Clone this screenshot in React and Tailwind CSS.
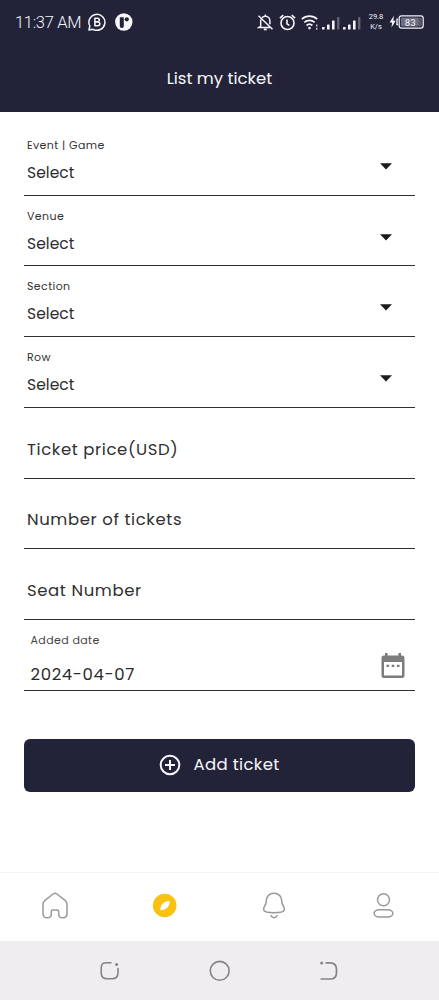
import { useState } from 'react';
import clsx from 'clsx';

const SELECT_FIELDS = [
  { label: 'Event | Game', tracking: 'tracking-[0.4px]' },
  { label: 'Venue', tracking: 'tracking-[0.4px]' },
  { label: 'Section', tracking: 'tracking-[0.4px]' },
  { label: 'Row', tracking: 'tracking-[0.4px]' },
];

const TEXT_FIELDS = ['Ticket price(USD)', 'Number of tickets', 'Seat Number'];

// ─── Status bar ───────────────────────────────────────────────────────────────
function Signal() {
  return (
    <svg className="h-[14px] w-[18px]" viewBox="0 0 18 14" fill="#f4f4fa">
      <rect x="0" y="11" width="2.6" height="2.6" rx="0.6" />
      <rect x="5" y="8.5" width="2.6" height="5.1" rx="0.6" />
      <rect x="10" y="4.5" width="2.6" height="9.1" rx="0.6" />
      <rect x="15" y="1" width="2.4" height="12.6" rx="0.6" opacity="0.3" />
    </svg>
  );
}

function StatusBar() {
  return (
    <div className="flex h-11 items-center pl-[15px] pr-[14px] text-[#f4f4fa]">
      <span className="w-[73px] whitespace-nowrap pt-[2px] font-[Roboto,sans-serif] text-[16.5px] font-light leading-5 tracking-[-0.3px]">11:37 AM</span>
      <svg className="h-[18px] w-[18px]" viewBox="0 0 18 18" fill="none" stroke="currentColor" strokeWidth="1.5" strokeLinejoin="round">
        <path d="M1 17l.8-4A8 8 0 1 1 5 16.3Z" />
        <path d="M6.9 5.3h2.6a1.8 1.8 0 0 1 0 3.6H6.9zm0 3.6h3a1.9 1.9 0 0 1 0 3.8h-3z" strokeWidth="1.6" />
      </svg>
      <svg className="ml-[9px] h-[18px] w-[18px]" viewBox="0 0 18 18">
        <circle cx="8.8" cy="9" r="8.7" fill="#f7f7fb" />
        <path d="M4.8 4.2h4v8.8a2 2 0 0 1-4 0Z" fill="#222338" />
        <circle cx="11.8" cy="6.3" r="2.1" fill="#222338" />
      </svg>

      <div className="ml-auto flex items-center">
        <svg className="h-[17px] w-[17px]" viewBox="0 0 17 17" fill="none" stroke="currentColor" strokeWidth="1.5">
          <path d="M5 3.8C6 2.6 7.1 2.2 8.3 2.2c2.7 0 4.6 2 4.6 4.7v3.3M3.7 5.4v7.1L2.2 13.4h11.2M8.3.5v1.7M1.5 1.8l14 13.5" />
          <path d="M6.8 15.4h3" strokeWidth="1.8" />
        </svg>
        <svg className="ml-[5px] h-[17px] w-[17px]" viewBox="0 0 17 17" fill="none" stroke="currentColor" strokeWidth="1.6">
          <circle cx="8.5" cy="9" r="6.5" />
          <path d="M8 5.6v4.2l2.4 1.6M.9 4.2l3.4-3M12.7 1.2l3.4 3" />
        </svg>
        <svg className="ml-[5px] h-[17px] w-[19px]" viewBox="0 0 19 17" fill="none" stroke="currentColor" strokeWidth="1.7">
          <path d="M.8 5.2a11.3 11.3 0 0 1 15.4 0M3.3 8.4a7.6 7.6 0 0 1 10.4 0M5.6 11.5a4.3 4.3 0 0 1 5.8 0" />
          <circle cx="8.5" cy="14.1" r="1.3" fill="currentColor" stroke="none" />
          <path d="M15.8 10.5v2M15.8 13.8v2" strokeWidth="1.1" />
        </svg>
        <div className="ml-[2px] flex gap-[3px] pt-[2px]">
          <Signal />
          <Signal />
        </div>
        <div className="ml-[6px] w-[18px] whitespace-nowrap text-center font-[Roboto,sans-serif] text-[7.5px] leading-[10px]">
          <div>29.8</div>
          <div>K/s</div>
        </div>
        <svg className="ml-[4px] h-[14px] w-[36px]" viewBox="0 0 36 14">
          <path d="M4.9.8.6 7.6h2.5l-.6 5 4.2-6.8H4.3Z" fill="currentColor" />
          <path d="M9.2 4.2H8v5.3h1.2" fill="none" stroke="currentColor" strokeWidth="1.3" />
          <rect x="10.2" y="0.9" width="24" height="12.2" rx="2.3" fill="#222338" stroke="#f4f4fa" strokeWidth="1.2" />
          <rect x="11.8" y="2.4" width="18" height="9.2" rx="1" fill="#6d6e82" />
          <rect x="29.8" y="2.4" width="3" height="9.2" rx="0.8" fill="#9b9baa" opacity="0.45" />
          <text x="21.2" y="10.6" textAnchor="middle" fontFamily="Roboto, sans-serif" fontSize="9.6" fill="#f7f7fb">83</text>
        </svg>
      </div>
    </div>
  );
}

// ─── Form rows ────────────────────────────────────────────────────────────────
function SelectField({ label, tracking }) {
  return (
    <button type="button" className="flex h-[70.75px] w-full border-b border-[#303030] pl-[3px] pr-[23.5px] text-left">
      <span className="flex flex-1 flex-col pt-[13px]">
        <span className={clsx('text-[11px] leading-[14px] text-[#333]', tracking)}>{label}</span>
        <span className="mt-[10px] pt-px text-[15.5px] leading-5 tracking-[0.05px] text-[#2d2d2d]">Select</span>
      </span>
      <svg className="mt-[38px] h-[7px] w-3" viewBox="0 0 12 7">
        <path d="M0 .2h12L6 6.5Z" fill="#1b1b1b" />
      </svg>
    </button>
  );
}

function TextField({ label }) {
  return (
    <div className="flex h-[70.75px] items-center border-b border-[#303030] pl-[3px] pt-[14px]">
      <span className="whitespace-nowrap text-[16.5px] leading-6 tracking-[0.6px] text-[#303030]">{label}</span>
    </div>
  );
}

function DateField() {
  return (
    <div className="flex h-[70.75px] justify-between border-b border-[#303030] pl-[6.5px] pr-[10px]">
      <div className="pt-[13px]">
        <div className="text-[11px] leading-[14px] tracking-[0.4px] text-[#444]">Added date</div>
        <div className="mt-[16px] text-[16.5px] leading-6 tracking-[0.65px] text-[#2b2b2b]">2024-04-07</div>
      </div>
      <svg className="mt-[32px] h-[27px] w-6" viewBox="0 0 24 27">
        <path d="M4 1h2.6v2.5h10.8V1H20v2.5h1a2.5 2.5 0 0 1 2.5 2.5v17.5A2.5 2.5 0 0 1 21 26H3A2.5 2.5 0 0 1 .5 23.5V6A2.5 2.5 0 0 1 3 3.5h1ZM3 10v13.5h18V10Z" fill="#7c7c7c" fillRule="evenodd" />
        <path d="M5.5 12.7h2.6v2.4H5.5zM10.7 12.7h2.6v2.4h-2.6zM15.9 12.7h2.6v2.4h-2.6z" fill="#7c7c7c" />
      </svg>
    </div>
  );
}

// ─── Bottom tabs ──────────────────────────────────────────────────────────────
const TABS = [
  {
    id: 'home',
    icon: (
      <path d="M13 1.2c.8 0 1.4.3 2 .8l8 6.3c1.3 1 2 2.2 2 3.7v9.5c0 2.7-1.7 4.3-4.1 4.3-2.5 0-4.2-1.1-4.2-3.6v-2.6c0-1-.6-1.5-1.5-1.5h-4.4c-.9 0-1.5.5-1.5 1.5v2.6c0 2.5-1.7 3.6-4.2 3.6C2.7 25.8 1 24.2 1 21.5V12c0-1.5.7-2.7 2-3.7L11 2c.6-.5 1.2-.8 2-.8Z" />
    ),
  },
  {
    id: 'explore',
    icon: (
      <g stroke="none">
        <circle cx="12.7" cy="13.5" r="11.8" fill="#f9c210" />
        <path d="M17.6 9c-3.5.2-6.500 1.400-7.900 3.700-1 1.700-1.300 3.500-1.200 5.600 3.700-.2 6.400-1.500 7.900-4 .9-1.600 1.200-3.300 1.200-5.300Z" fill="#fff" />
      </g>
    ),
  },
  {
    id: 'alerts',
    icon: (
      <>
        <path d="M13 1.2c-4.500 0-7.700 3.300-7.700 7.400 0 3-.7 4.300-1.900 6.100-.8 1.200-1.100 2.200-.7 3.300.7 2 4.400 2.700 10.300 2.700s9.600-.7 10.300-2.700c.4-1.100.1-2.100-.7-3.300-1.200-1.800-1.900-3.100-1.900-6.100 0-4.100-3.200-7.400-7.700-7.400Z" />
        <path d="M9.900 23.600c1.600 2.700 4.600 2.700 6.200 0" />
      </>
    ),
  },
  {
    id: 'profile',
    icon: (
      <>
        <circle cx="12.500" cy="7.700" r="6" />
        <rect x="3.100" y="17.700" width="18.800" height="7.300" rx="5" ry="3.650" />
      </>
    ),
  },
];

function TabBar({ active, onChange }) {
  return (
    <nav className="flex h-[69px] border-t border-[#f3f3f3] bg-white">
      {TABS.map((tab) => (
        <button key={tab.id} type="button" aria-pressed={active === tab.id} onClick={() => onChange(tab.id)} className="flex flex-1 justify-center pt-[18.5px]">
          <svg className="h-[27px] w-[26px]" viewBox="0 0 26 27" fill="none" stroke="#999" strokeWidth="1.5" strokeLinecap="round">
            {tab.icon}
          </svg>
        </button>
      ))}
    </nav>
  );
}

function SystemNav() {
  return (
    <div className="flex h-[59px] justify-between bg-[#efedf0] px-[99px] pt-[19px]">
      <svg className="h-[22px] w-[22px]" viewBox="0 0 22 22" fill="none" stroke="#858387" strokeWidth="1.6" strokeLinecap="round">
        <path d="M12 2.8H7.5c-3.8 0-5.3 1.500-5.300 5.300v4.600c0 4.300 1.600 6 6 6h4.800c4.400 0 6-1.700 6-6V8.500" />
        <circle cx="17.6" cy="4.5" r="1.5" fill="#858387" stroke="none" />
      </svg>
      <svg className="h-[22px] w-[22px]" viewBox="0 0 22 22" fill="none" stroke="#858387" strokeWidth="1.6">
        <circle cx="10.7" cy="10.8" r="9.4" />
      </svg>
      <svg className="h-[22px] w-[22px]" viewBox="0 0 22 22" fill="none" stroke="#858387" strokeWidth="1.7" strokeLinecap="round">
        <path d="M8.300 2.900h3.500c4.300 0 6.700 2.400 6.700 6.500v3c0 4.200-2.200 6.600-6.200 6.600H3.200" />
        <circle cx="3.700" cy="2.900" r="1.500" fill="#858387" stroke="none" />
      </svg>
    </div>
  );
}

export default function App() {
  const [tab, setTab] = useState('explore');

  return (
    <div className="flex h-[1000px] w-[439px] flex-col overflow-hidden bg-white font-[Poppins,Inter,sans-serif]">
      <header className="h-28 bg-[#222338]">
        <StatusBar />
        <h1 className="pt-[23px] text-center text-[16.5px] font-normal leading-6 text-[#f7f7fb]">List my ticket</h1>
      </header>

      <main className="flex-1 px-6 pt-[12.75px]">
        {SELECT_FIELDS.map((field) => <SelectField key={field.label} {...field} />)}
        {TEXT_FIELDS.map((label) => <TextField key={label} label={label} />)}
        <DateField />

        <button type="button" className="mt-12 flex h-[53px] w-full items-center justify-center rounded-md bg-[#222338] text-[#f7f7fb]">
          <svg className="h-[22px] w-[22px]" viewBox="0 0 22 22" fill="none" stroke="currentColor" strokeWidth="2">
            <circle cx="11" cy="11" r="9.3" />
            <path d="M11 6v10M6 11h10" />
          </svg>
          <span className="ml-3 text-[16.5px] leading-6 tracking-[0.35px]">Add ticket</span>
        </button>
      </main>

      <TabBar active={tab} onChange={setTab} />
      <SystemNav />
    </div>
  );
}
